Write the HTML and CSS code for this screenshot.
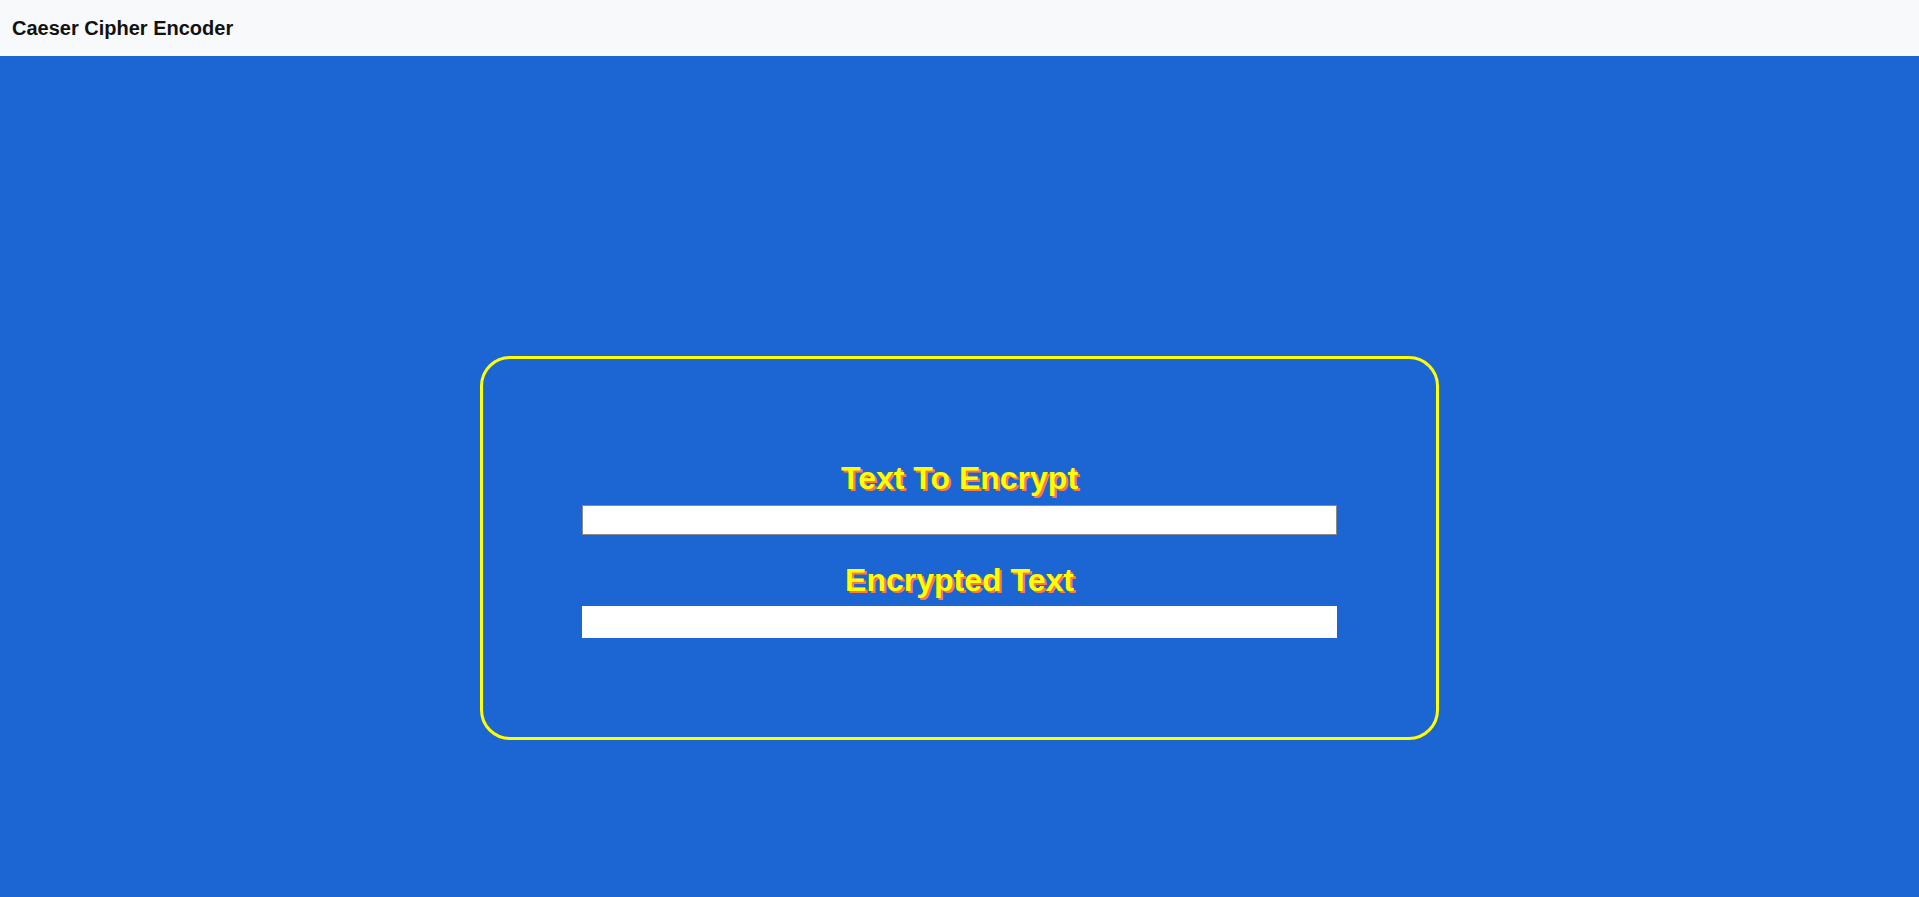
FILE: index.html
```html
<!DOCTYPE html>
<html lang="en">
<head>
<meta charset="utf-8">
<title>Caeser Cipher Encoder</title>
<link rel="stylesheet" href="styles.css">
</head>
<body>
<header class="topbar">
  <span class="brand">Caeser Cipher Encoder</span>
</header>
<main class="main">
  <section class="card">
    <h2 class="label">Text To Encrypt</h2>
    <input class="field" type="text">
    <h2 class="label label-second">Encrypted Text</h2>
    <div class="output"></div>
  </section>
</main>
</body>
</html>
```
FILE: styles.css
```css
* { box-sizing: border-box; }
html, body { margin: 0; padding: 0; }
body {
  font-family: "Liberation Sans", Arial, sans-serif;
  background: #1c66d3;
  min-height: 100vh;
}
.topbar {
  height: 56px;
  background: #f8f9fa;
  display: flex;
  align-items: center;
  padding-left: 12px;
}
.brand {
  font-size: 20px;
  font-weight: bold;
  color: #111;
}
.main {
  padding-top: 300px;
  display: flex;
  justify-content: center;
}
.card {
  width: 50%;
  border: 3px solid #ffff00;
  border-radius: 30px;
  padding: 101px 99px 99px;
  display: flex;
  flex-direction: column;
}
.label {
  margin: 0 0 8px;
  font-size: 32px;
  font-weight: bold;
  line-height: 37px;
  text-align: center;
  color: #ffff00;
  text-shadow: 2px 2px 0 #ff7a3a;
}
.label-second {
  margin-top: 27px;
  margin-bottom: 7px;
}
.field {
  display: block;
  width: 100%;
  height: 30px;
  border: 1px solid #8a8a8a;
  background: #fff;
  margin: 0;
  font-size: 16px;
}
.output {
  width: 100%;
  height: 32px;
  background: #fff;
}
```
